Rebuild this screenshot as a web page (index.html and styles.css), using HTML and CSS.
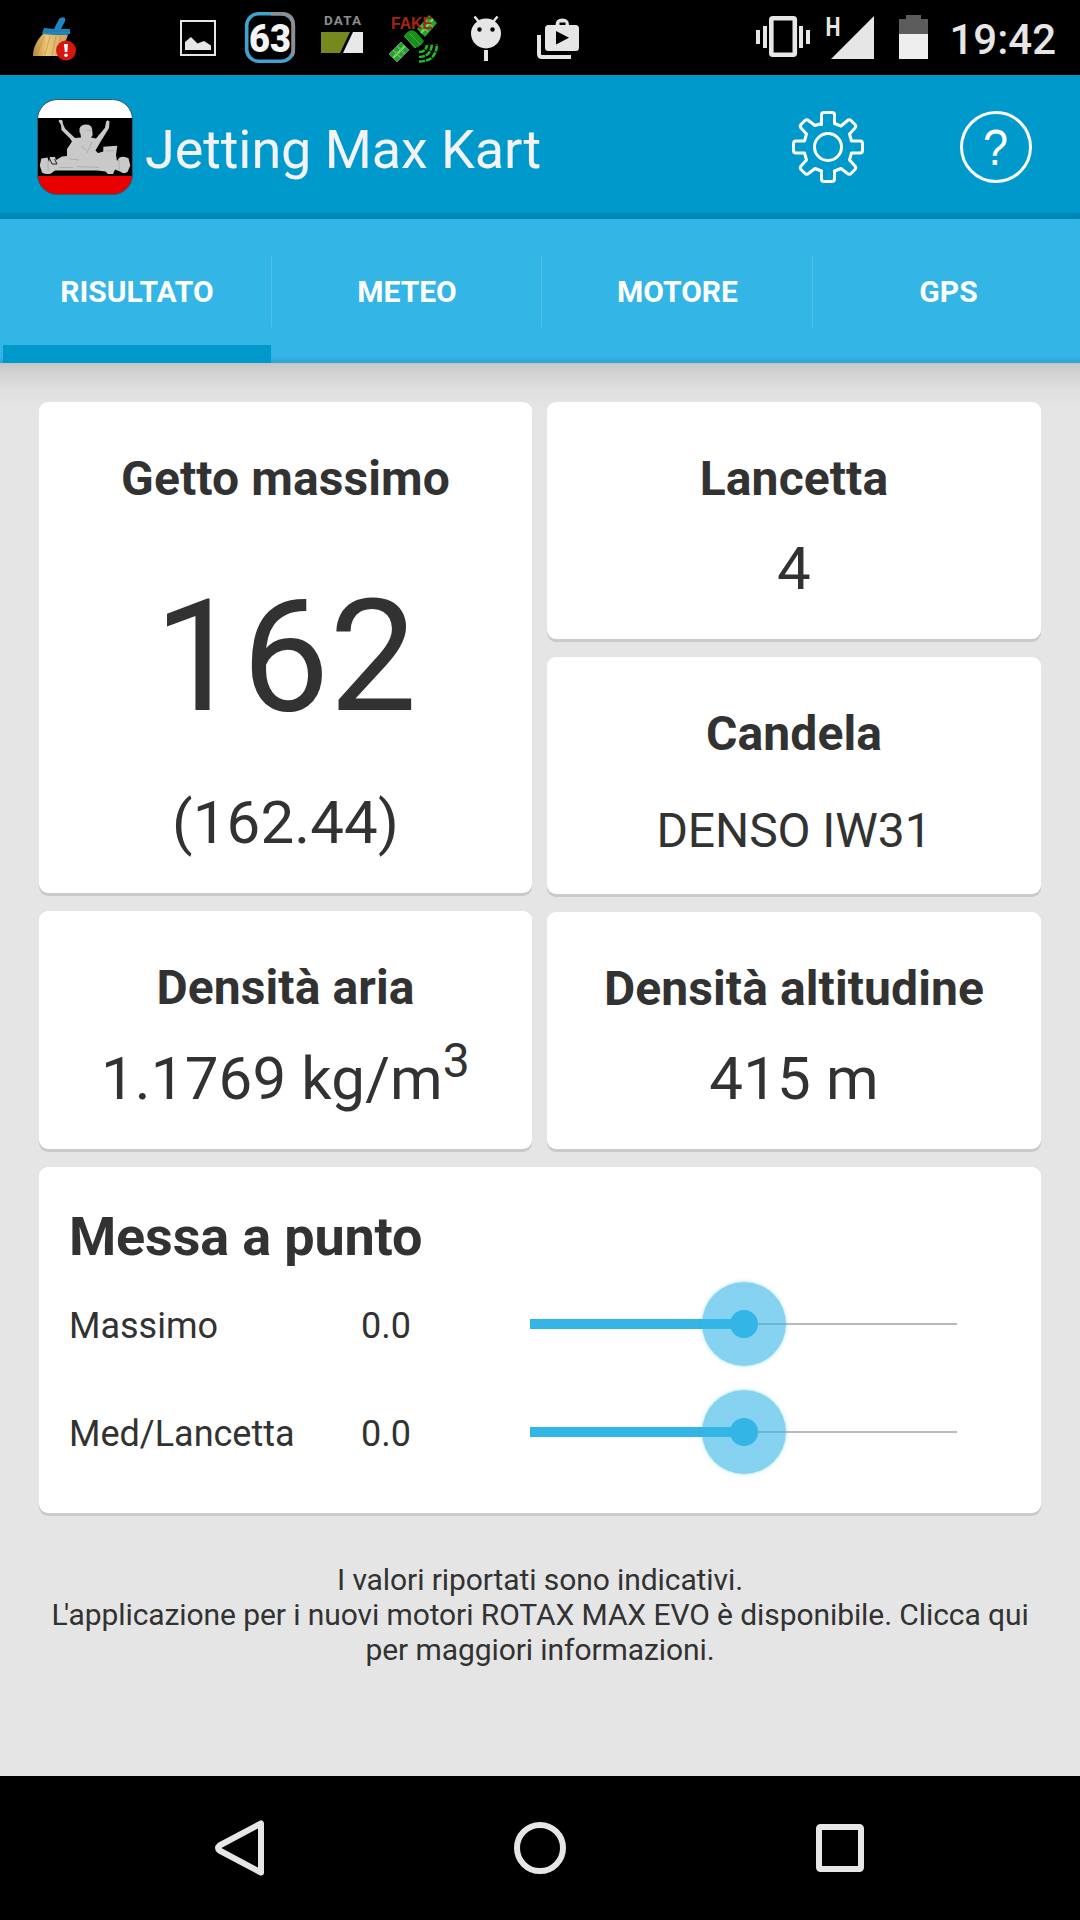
FILE: index.html
```html
<!DOCTYPE html>
<html lang="it">
<head>
<meta charset="utf-8">
<title>Jetting Max Kart</title>
<link rel="stylesheet" href="styles.css">
</head>
<body>
<div class="screen">
  <header class="status">
    <div class="notifications">
      <svg class="slot" viewBox="18 0 72 75">
        <defs>
          <linearGradient id="bristle" x1="0" x2="1"><stop offset="0" stop-color="#b98a3c"/><stop offset=".4" stop-color="#ecc878"/><stop offset="1" stop-color="#c9a35a"/></linearGradient>
        </defs>
        <path d="M43 34C37 40 33 47 33 56H60L68 35Z" fill="url(#bristle)"/>
        <path d="M44 36L37 55M50 36L45 55M56 36L52 55M61 36L58 50" stroke="#b58c45" stroke-width=".6"/>
        <path d="M44 28L54 29L59 19Q62 16 65 18Q66 21 63 25L61 29L70 29V34L66 35L42 34Z" fill="#1f86c4"/>
        <path d="M44 31H69" stroke="#2b6f9e" stroke-width="1"/>
        <circle cx="66" cy="50.5" r="10" fill="#d8160f"/>
        <path d="M64 44H68L67.3 52H64.8Z" fill="#fff"/><circle cx="66" cy="55.3" r="1.8" fill="#fff"/>
      </svg>
      <svg class="slot slot-after-gap" viewBox="162 0 72 75">
        <rect x="181" y="21" width="34" height="34" fill="none" stroke="#e6e6e6" stroke-width="2"/>
        <path d="M185 50V42L191 37L197.500 43.500L204 41L211 45.500V50Z" fill="#e6e6e6"/>
      </svg>
      <svg class="slot" viewBox="234 0 72 75">
        <rect x="246.700" y="13.700" width="46.600" height="47.600" rx="12" fill="none" stroke="#3fa3cf" stroke-width="3.600"/>
        <path d="M271 13.700H281.500Q293.300 13.700 293.300 25.500V49.500Q293.300 54 291.500 56" fill="none" stroke="#8f8f93" stroke-width="3.600"/>
        <text class="badge-count" x="270" y="51.500" textLength="42" lengthAdjust="spacingAndGlyphs">63</text>
      </svg>
      <svg class="slot" viewBox="306 0 72 75">
        <text class="data-label" x="324" y="25" textLength="37">DATA</text>
        <path d="M321 32H350L340 53H321Z" fill="#76891f"/>
        <path d="M353 32H363V53H343Z" fill="#e8e8e8"/>
      </svg>
      <svg class="slot" viewBox="378 0 72 75">
        <path d="M417 29L429 15L437 23L425 37Z" fill="#24a52a"/>
        <path d="M389 54L401 42L409 50L397 62Z" fill="#24a52a"/>
        <path d="M404 36Q410 27 416 32L424 41Q421 47 414 48Z" fill="#129512"/>
        <path d="M393 58L405 46M421 33L433 19" stroke="#59e85b" stroke-width="2"/>
        <path d="M393 50L401 58M397 46L405 54M421 25L428 32M425 20L433 27" stroke="#88a388" stroke-width="1.300"/>
        <path d="M389 54L401 42L409 50L397 62ZM404 36L416 48M409 33L421 45" fill="none" stroke="#718571" stroke-width="1"/>
        <path d="M419 52Q426 52 427 45M419 57Q431 57 432 44M419 61.500Q436.500 61.500 437 44" fill="none" stroke="#22bd26" stroke-width="2.500" stroke-dasharray="6 1"/>
        <text class="fake-label" x="391" y="28.500" textLength="42" lengthAdjust="spacingAndGlyphs">FAKE</text>
      </svg>
      <svg class="slot" viewBox="450 0 72 75">
        <circle cx="486" cy="33.500" r="15" fill="#e6e6e6"/>
        <path d="M474.500 16.500L479 22M497.500 16.500L493 22" stroke="#e6e6e6" stroke-width="2.500"/>
        <circle cx="479.500" cy="29.500" r="2.200"/><circle cx="492.500" cy="29.500" r="2.200"/>
        <rect x="484" y="50" width="4" height="11" fill="#e6e6e6"/>
      </svg>
      <svg class="slot" viewBox="522 0 72 75">
        <path d="M555.500 25Q555.500 18.500 562.300 18.500T569 25H575.500Q579 25 579 28.500V47.500Q579 51 575.500 51H548.500Q545 51 545 47.500V28.500Q545 25 548.500 25ZM559.500 25H565.500V22.500H559.500ZM556 31V44.500L569 37.800Z" fill="#e6e6e6" fill-rule="evenodd"/>
        <path d="M539 35V54Q539 57 542 57H571" fill="none" stroke="#e6e6e6" stroke-width="4"/>
      </svg>
    </div>
    <div class="system">
      <svg class="indicators" viewBox="750 0 184 75">
        <rect x="771.300" y="18.300" width="23.500" height="36.500" rx="1.500" fill="none" stroke="#e6e6e6" stroke-width="4.600"/>
        <path d="M756 30h4v14h-4zM763 26h4v22h-4zM799 26h4v22h-4zM806 30h4v14h-4z" fill="#e6e6e6"/>
        <text class="net-label" x="825.500" y="35.500" textLength="15" lengthAdjust="spacingAndGlyphs">H</text>
        <path d="M874 16V59H831Z" fill="#e6e6e6"/>
        <path d="M906 15H921V19H928V34H899V19H906Z" fill="#5c5c5c"/>
        <rect x="899" y="34" width="29" height="25" fill="#eee"/>
      </svg>
      <time class="clock">19:42</time>
    </div>
  </header>

  <div class="appbar">
    <svg class="logo" viewBox="0 0 96 96">
      <defs><clipPath id="tile"><rect x=".5" y=".5" width="95" height="95" rx="20"/></clipPath></defs>
      <g clip-path="url(#tile)">
        <rect width="96" height="96" fill="#000"/>
        <rect width="96" height="19" fill="#fff"/>
        <rect y="77" width="96" height="19" fill="#e80000"/>
      </g>
      <rect x=".5" y=".5" width="95" height="95" rx="20" fill="none" stroke="#2a5e72" stroke-width="1"/>
      <path fill="#c9c9c9" d="M21.500 22Q23 20 25.500 21.500L26 25L28 29.500L38 39L44 38.500L43.500 35L42.500 33V29.500Q44 25.500 49 25.500Q54 25.500 55 29.500L55.700 36L54 38.500L59 39.500L68 28.700L69 23Q70.500 20.500 72.500 22.500L72 29L64 42L58.500 51.500L61 54L66.300 52.500V47.700L80.300 46.700L79 56L80 62L82.500 58.500Q87 56.500 91.500 59.300L93.300 66.500L90.500 73Q87 75.500 83 72.500L78 70.500L76 75L71 75L68.500 72.500L60 71.500H18L14 74.500Q9 76 5 73.500L2.800 66.500L4.300 59.500L10.500 58.500L12 63L13 58H18L19 61L25 57.500L30 57V50L35 42.500L33 39.500L24.500 31L24 26Z"/>
      <path d="M12.500 59.500L15 65H20L17.500 60" fill="none" stroke="#222" stroke-width="1"/>
      <path d="M22 68.500H36M40 67.500L62 68.500M44 47L50 52M55 43L50 54M33 60L42 61M69 52L77 51.500M82 61L82 71M11 62V72M49 31L54 32" fill="none" stroke="#a8a8a8" stroke-width=".8"/>
    </svg>
    <h1 class="title">Jetting Max Kart</h1>
    <div class="actions">
      <svg class="action" viewBox="-38 -38 76 76">
        <path d="M-6.500 -22.500V-32Q-6.500 -34.500 -4 -34.500H4Q6.500 -34.500 6.500 -32V-23.500L13 -21L19.500 -26.500Q21.200 -28 23 -26.500L27 -22.500Q28.500 -20.800 27 -19L21.500 -13L23.500 -6H32Q34.500 -6 34.500 -3.500V3.500Q34.500 6 32 6H23.500L21.500 13L27 19Q28.500 20.800 27 22.500L23 26.500Q21.200 28 19.500 26.500L13 21.500L6.500 24V32Q6.500 34.500 4 34.500H-4Q-6.500 34.500 -6.500 32V24L-13 21.500L-19.500 26.500Q-21.200 28 -23 26.500L-27 22.500Q-28.500 20.800 -27 19L-21.500 13L-23.500 6H-32Q-34.500 6 -34.500 3.500V-3.500Q-34.500 -6 -32 -6H-23.500L-21.500 -13L-27 -19Q-28.500 -20.800 -27 -22.500L-23 -26.500Q-21.200 -28 -19.500 -26.500L-13 -21.500L-6.500 -23.500Z"/>
        <circle r="13.500"/>
      </svg>
      <svg class="action" viewBox="-38 -38 76 76">
        <circle r="34.500"/>
        <text class="help-mark" x="-.5" y="18" textLength="25" lengthAdjust="spacingAndGlyphs">?</text>
      </svg>
    </div>
  </div>

  <nav class="tabs">
    <a class="tab tab-active">RISULTATO</a>
    <a class="tab">METEO</a>
    <a class="tab">MOTORE</a>
    <a class="tab">GPS</a>
  </nav>

  <main class="content">
    <div class="cards">
      <div class="column">
        <section class="card card-main">
          <h2 class="label">Getto massimo</h2>
          <p class="jet">162</p>
          <p class="value">(162.44)</p>
        </section>
        <section class="card card-air">
          <h2 class="label">Densità aria</h2>
          <p class="value value-air">1.1769 kg/m<span class="sup">3</span></p>
        </section>
      </div>
      <div class="column">
        <section class="card">
          <h2 class="label">Lancetta</h2>
          <p class="value value-spaced">4</p>
        </section>
        <section class="card">
          <h2 class="label">Candela</h2>
          <p class="plug">DENSO IW31</p>
        </section>
        <section class="card">
          <h2 class="label">Densità altitudine</h2>
          <p class="value value-spaced">415 m</p>
        </section>
      </div>
    </div>

    <section class="card tuning">
      <h2 class="heading">Messa a punto</h2>
      <div class="row">
        <span class="name">Massimo</span>
        <span class="amount">0.0</span>
        <div class="slider"><div class="fill"></div><div class="rest"></div><div class="thumb"></div></div>
      </div>
      <div class="row">
        <span class="name">Med/Lancetta</span>
        <span class="amount">0.0</span>
        <div class="slider"><div class="fill"></div><div class="rest"></div><div class="thumb"></div></div>
      </div>
    </section>

    <p class="note">I valori riportati sono indicativi.<br><span class="elision">L</span>'applicazione per i nuovi motori ROTAX MAX EVO è disponibile. Clicca qui<br>per maggiori informazioni.</p>
  </main>

  <footer class="navbar">
    <svg class="key" viewBox="-32 -32 64 64"><path d="M21 -24.500V24.500L-20.500 2.500Q-23.500 0 -20.500 -2.500Z"/></svg>
    <svg class="key" viewBox="-32 -32 64 64"><circle r="23"/></svg>
    <svg class="key" viewBox="-32 -32 64 64"><rect x="-21" y="-21" width="42" height="42" rx="1.500"/></svg>
  </footer>
</div>
</body>
</html>
```
FILE: styles.css
```css
* { box-sizing: border-box; }

body {
  margin: 0;
  background: #000;
  color: #323232;
  font-family: Roboto, "Liberation Sans", sans-serif;
}

h1, h2, p { margin: 0; }

.screen {
  width: 1080px;
  height: 1920px;
  display: flex;
  flex-direction: column;
  overflow: hidden;
}

/* System status bar */
.status {
  height: 75px;
  flex: none;
  display: flex;
  justify-content: space-between;
  background: #000;
}
.notifications { display: flex; padding-left: 18px; }
.slot { width: 72px; height: 75px; display: block; }
.slot-after-gap { margin-left: 72px; }
.system { display: flex; padding-right: 24px; }
.indicators { width: 184px; height: 75px; display: block; }
.clock {
  width: 122px;
  padding-top: 15px;
  font-size: 42px;
  line-height: 49px;
  font-weight: 500;
  color: #e6e6e6;
  text-align: right;
  white-space: nowrap;
}
.badge-count { font-size: 38.5px; font-weight: 900; fill: #f4f4f4; text-anchor: middle; }
.data-label { font-size: 13.5px; font-weight: 700; fill: #8d8d8d; }
.fake-label { font-family: "Liberation Sans", sans-serif; font-size: 16px; font-weight: 700; fill: #a8240c; }
.net-label { font-size: 25px; font-weight: 700; fill: #e6e6e6; }

/* Application bar */
.appbar {
  height: 144px;
  flex: none;
  display: flex;
  align-items: flex-start;
  background: linear-gradient(#0099cc 137px, #0086b4 139px);
}
.logo { width: 96px; height: 96px; margin: 24px 0 0 37px; }
.title {
  margin: 43px 0 0 12px;
  font-size: 54px;
  line-height: 63px;
  font-weight: 400;
  letter-spacing: -.1px;
  color: #f3f3f7;
  white-space: nowrap;
}
.actions { display: flex; gap: 92px; margin: 34px 46px 0 auto; }
.action {
  width: 76px;
  height: 76px;
  fill: none;
  stroke: #fff;
  stroke-width: 3;
  stroke-linejoin: round;
}
.help-mark {
  font-family: "Liberation Sans", sans-serif;
  font-size: 50px;
  text-anchor: middle;
  fill: #fff;
  stroke: none;
}

/* Tabs */
.tabs {
  height: 144px;
  flex: none;
  display: grid;
  grid-template-columns: 270px 270px 271px 1fr;
  padding-left: 2px;
  background: linear-gradient(#33b5e5 137px, #2ca2ce 144px);
}
.tab {
  display: flex;
  align-items: center;
  justify-content: center;
  font-size: 30px;
  line-height: 35px;
  font-weight: 700;
  color: #fff;
  background: linear-gradient(#51c0e9, #51c0e9) no-repeat right 37px / 1px 71px;
}
.tab:last-child { padding-left: 4px; background: none; }
.tab-active {
  background:
    linear-gradient(#0099cc, #0099cc) no-repeat 1px 100% / 268px 18px,
    linear-gradient(#51c0e9, #51c0e9) no-repeat right 37px / 1px 71px;
}

/* Results */
.content {
  flex: 1;
  padding: 39px 39px 0;
  background: #e5e5e5 linear-gradient(#bcc3cb 0, #c9c9c9 2px, #d6d6d6 14px, #dfdfdf 26px, #e5e5e5 46px);
}
.cards { display: grid; grid-template-columns: 493px 494px; column-gap: 15px; }
.column { display: flex; flex-direction: column; gap: 18px; }
.card {
  height: 237px;
  padding-top: 48px;
  border-radius: 9px;
  background: #fff;
  box-shadow: 0 3px 0 #cacaca;
  text-align: center;
}
.card-main { height: 491px; }
.card-air { height: 238px; }
.label { font-size: 48px; line-height: 57px; font-weight: 700; letter-spacing: .1px; }
.jet { margin-top: 58px; font-size: 156px; line-height: 183px; }
.value { font-size: 60px; line-height: 71px; letter-spacing: .15px; }
.jet + .value { margin-top: 39px; }
.value-spaced { margin-top: 26px; }
.value-air { margin-top: 27px; }
.sup { position: relative; top: -22.500px; font-size: 48px; line-height: 0; }
.plug { margin-top: 40px; font-size: 48px; line-height: 57px; letter-spacing: -.1px; }

/* Tuning */
.tuning {
  height: 346px;
  margin-top: 18px;
  padding: 38px 84px 0 30px;
  text-align: left;
}
.heading { margin-bottom: 2px; font-size: 54px; line-height: 63px; font-weight: 700; letter-spacing: -.17px; }
.row {
  height: 108px;
  display: grid;
  grid-template-columns: 292px 169px 427px;
  align-items: center;
  font-size: 36px;
  line-height: 42px;
}
.name, .amount { padding-top: 4px; }
.slider {
  position: relative;
  height: 84px;
  display: grid;
  grid-template-columns: 1fr 1fr;
  align-items: center;
}
.fill { height: 10px; background: #33b5e5; }
.rest { height: 2px; background: #bababa; }
.thumb {
  position: absolute;
  left: 172px;
  top: 0;
  width: 84px;
  height: 84px;
  border-radius: 50%;
  background: radial-gradient(circle, #33b5e5 13.500px, rgba(51, 181, 229, .6) 14.500px);
  box-shadow: 0 0 3px 1px rgba(51, 181, 229, .25);
}

.note {
  margin: 49px -39px 0;
  font-size: 30px;
  line-height: 35px;
  letter-spacing: -.09px;
  text-align: center;
}
.elision { letter-spacing: -3.5px; }

/* Navigation keys */
.navbar {
  height: 144px;
  flex: none;
  display: flex;
  justify-content: center;
  align-items: center;
  gap: 236px;
  background: #000;
}
.key { width: 64px; height: 64px; fill: none; stroke: #e6e6e6; stroke-width: 6; stroke-linejoin: round; }
```
